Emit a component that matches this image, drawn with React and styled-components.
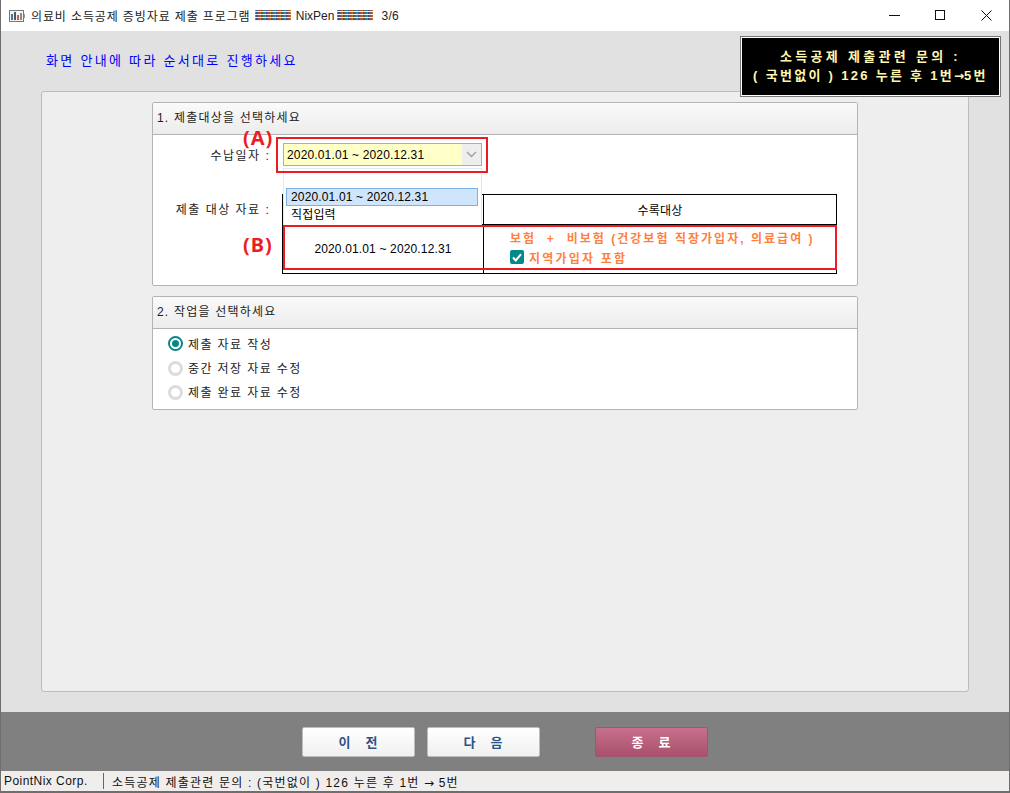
import React from 'react'
import styled, { createGlobalStyle } from 'styled-components'

const Global = createGlobalStyle`
    html, body {
        margin: 0;
        padding: 0;
    }
    body {
        font-family: "Liberation Sans", "Noto Sans CJK KR", sans-serif;
        font-size: 12px;
        color: #000;
    }
`

const Window = styled.div`
    width: 1010px;
    height: 793px;
    box-sizing: border-box;
    display: flex;
    flex-direction: column;
    border: 1px solid #6e6e6e;
    border-top: 0;
    border-bottom-width: 2px;
    overflow: hidden;
`

const TitleBar = styled.div`
    height: 31px;
    flex: none;
    background: #fff;
    display: flex;
    align-items: center;
    padding-left: 8px;
`

const TitleText = styled.span`
    margin-left: 6px;
    font-size: 12px;
    letter-spacing: 0.88px;
    color: #222;
    white-space: pre;
    display: flex;
    align-items: center;
`

const TitleLatin = styled.span`
    letter-spacing: 0;
    margin-right: 3px;
`

const TitleStep = styled.span`
    letter-spacing: 0.3px;
    margin-left: 3px;
`

const Hatch = styled.span`
    display: inline-block;
    width: 36px;
    height: 11px;
    margin-right: 5px;
    background-image:
        repeating-linear-gradient(0deg, rgba(255, 255, 255, 0.9) 0 1px, transparent 1px 3px),
        repeating-linear-gradient(90deg, #b5702f 0 1px, #34508f 1px 2px, #5a5a5a 2px 3px, #a0503f 3px 4px, #2f7f8f 4px 5px);
`

const WinButtons = styled.div`
    margin-left: auto;
    display: flex;
    height: 100%;
`

const WinButton = styled.div`
    width: 46px;
    display: grid;
    place-items: center;
`

const Body = styled.div`
    flex: 1;
    background: #e1e1e1;
    padding: 21px 40px 20px;
    display: flex;
    flex-direction: column;
    position: relative;
`

const Hint = styled.div`
    height: 18px;
    margin: 0 0 21px 5px;
    font-size: 13px;
    line-height: 18px;
    letter-spacing: 2.3px;
    color: #0000ff;
`

const Notice = styled.div`
    position: absolute;
    top: 5px;
    right: 8px;
    width: 261px;
    height: 61px;
    box-sizing: border-box;
    background: #000;
    border: 1px solid #fff;
    outline: 1px solid #777;
    outline-offset: -1px;
    box-shadow: inset 0 0 0 1px #fff;
    color: #fff7b0;
    font-size: 13px;
    font-weight: 700;
    line-height: 19px;
    text-align: center;
    display: flex;
    flex-direction: column;
    justify-content: center;
`

const NoticeLine = styled.div`
    letter-spacing: ${p => p.$spacing}px;
    white-space: pre;
`

const ArrowGlyph = styled.span`
    font-family: "DejaVu Sans", sans-serif;
    font-size: ${p => p.$size || 12}px;
    letter-spacing: 0;
`

const Panel = styled.div`
    flex: 1;
    background: #eeeeee;
    border: 1px solid #bcbcbc;
    border-radius: 3px;
    padding: 10px 110px;
    display: flex;
    flex-direction: column;
    gap: 10px;
`

const Group = styled.section`
    background: #fff;
    border: 1px solid #b4b4b4;
    border-radius: 2px;
    position: relative;
`

const GroupHead = styled.div`
    height: 32px;
    box-sizing: border-box;
    border-bottom: 1px solid #b4b4b4;
    background: linear-gradient(#fafafa, #ececec);
    padding-left: 4px;
    font-size: 12px;
    letter-spacing: 1.2px;
    line-height: 30px;
    color: #222;
`

const TargetBody = styled.div`
    height: 150px;
    position: relative;
    display: grid;
    grid-template-columns: 130px 1fr;
    grid-template-rows: 38px 21px 80px;
    padding-right: 20px;
`

const Label = styled.div`
    grid-column: 1;
    grid-row: ${p => (p.$low ? 3 : 1)};
    justify-self: end;
    align-self: ${p => (p.$low ? 'start' : 'center')};
    margin-top: ${p => (p.$low ? '6px' : '0')};
    margin-right: 3px;
    font-size: 12px;
    letter-spacing: 1.5px;
    white-space: pre;
    color: #222;
`

const SelectBox = styled.div`
    grid-column: 2;
    grid-row: 1;
    align-self: start;
    justify-self: start;
    width: 199px;
    height: 23px;
    margin-top: 8px;
    box-sizing: border-box;
    background: #ffffc8;
    border: 1px solid #adadad;
    display: flex;
    align-items: center;
    padding-left: 3px;
    letter-spacing: 0.15px;
    position: relative;
`

const Arrow = styled.span`
    position: absolute;
    right: 0;
    top: 0;
    bottom: 0;
    width: 19px;
    background: #eeeeee;
    display: grid;
    place-items: center;
`

const Listbox = styled.div`
    position: absolute;
    left: 130px;
    top: 33px;
    width: 199px;
    height: 58px;
    box-sizing: border-box;
    background: #fff;
    border: 1px solid #e6e6f2;
    border-bottom: 0;
    padding: 19px 3px 0 2px;
    z-index: 2;
`

const Option = styled.div`
    height: 18px;
    box-sizing: border-box;
    line-height: 16px;
    padding-left: 4px;
    letter-spacing: 0.15px;
    background: ${p => (p.$active ? '#cfe5fb' : 'transparent')};
    border: 1px solid ${p => (p.$active ? '#7cb1e2' : 'transparent')};
`

const Table = styled.div`
    grid-column: 2;
    grid-row: 3;
    width: 555px;
    height: 80px;
    margin-left: -1px;
    box-sizing: border-box;
    border: 1px solid #000;
    display: grid;
    grid-template-columns: 200px 1fr;
    grid-template-rows: 29px 1fr;
    align-self: start;
`

const Cell = styled.div`
    border-left: ${p => (p.$divide ? '1px solid #000' : '0')};
    border-top: ${p => (p.$top ? '1px solid #000' : '0')};
    display: flex;
    flex-direction: column;
    align-items: ${p => (p.$left ? 'flex-start' : 'center')};
    justify-content: center;
    padding-left: ${p => (p.$left ? '26px' : '0')};
    padding-bottom: ${p => (p.$left ? '4px' : '0')};
    letter-spacing: 0.15px;
    gap: 3px;
`

const Orange = styled.div`
    color: #ff7f3f;
    font-weight: 700;
    font-size: 12px;
    letter-spacing: ${p => p.$spacing || 2.2}px;
    display: flex;
    align-items: center;
    gap: 5px;
    white-space: pre;
`

const Check = styled.span`
    width: 14px;
    height: 14px;
    border-radius: 2px;
    background: #008a8a;
    display: grid;
    place-items: center;
`

const RedBox = styled.div`
    position: absolute;
    left: ${p => p.$left}px;
    top: ${p => p.$top}px;
    width: ${p => p.$width}px;
    height: ${p => p.$height}px;
    box-sizing: border-box;
    border: 2px solid #ed1c24;
    z-index: 3;
`

const Mark = styled.div`
    position: absolute;
    left: ${p => p.$left}px;
    top: ${p => p.$top}px;
    color: #ed1c24;
    font-family: "Noto Sans", "Liberation Sans", sans-serif;
    font-size: 20px;
    font-weight: 700;
    letter-spacing: 1px;
    line-height: 24px;
    z-index: 3;
`

const RadioList = styled.div`
    height: 80px;
    box-sizing: border-box;
    padding: 2px 0 0 15px;
    display: flex;
    flex-direction: column;
`

const RadioRow = styled.div`
    height: 24px;
    display: flex;
    align-items: center;
    gap: 5px;
    letter-spacing: 1.4px;
    color: #222;
`

const Radio = styled.span`
    width: 15px;
    height: 15px;
    margin-top: ${p => (p.$on ? '1px' : '3px')};
    box-sizing: border-box;
    border-radius: 50%;
    border: ${p => (p.$on ? '2px solid #0d8585' : '3px solid #dcdcdc')};
    display: grid;
    place-items: center;
    background: #fff;
    &::after {
        content: '';
        width: 7px;
        height: 7px;
        border-radius: 50%;
        background: ${p => (p.$on ? '#0d8585' : 'transparent')};
    }
`

const Footer = styled.div`
    height: 59px;
    flex: none;
    background: #808080;
    display: flex;
    align-items: center;
    padding-left: 301px;
    gap: 12px;
`

const Button = styled.button`
    width: 113px;
    height: 30px;
    padding: 0;
    border-radius: 2px;
    border: 1px solid ${p => (p.$danger ? '#a0566f' : '#bdbdbd')};
    background: ${p => (p.$danger ? 'linear-gradient(#c7708c, #a9506c)' : 'linear-gradient(#ffffff, #f0f0f0)')};
    color: ${p => (p.$danger ? '#fff' : '#2c5488')};
    font-family: inherit;
    font-size: 13px;
    font-weight: 700;
    letter-spacing: 1px;
    white-space: pre;
    margin-left: ${p => (p.$danger ? '43px' : '0')};
`

const StatusBar = styled.div`
    height: 20px;
    flex: none;
    background: #f0eded;
    display: flex;
    align-items: center;
    font-size: 12px;
    white-space: pre;
    color: #111;
`

const StatusLeft = styled.span`
    width: 103px;
    box-sizing: border-box;
    padding-left: 3px;
    letter-spacing: 0.45px;
    border-right: 1px solid #666;
    line-height: 16px;
`

const StatusRight = styled.span`
    padding-left: 8px;
    letter-spacing: 1.2px;
`

const ChartIcon = () => (
    <svg width="16" height="12" viewBox="0 0 16 12">
        <rect x="0.5" y="0.5" width="14" height="11" fill="#f4f4f4" stroke="#777" />
        <rect x="15" y="4" width="1" height="4" fill="#999" />
        <rect x="2" y="4" width="2" height="6" fill="#3a7ca8" />
        <rect x="5" y="2" width="2" height="8" fill="#555" />
        <rect x="8" y="5" width="2" height="5" fill="#c75b4a" />
        <rect x="11" y="3" width="2" height="7" fill="#888" />
    </svg>
)

const App = () => {
    const range = '2020.01.01 ~ 2020.12.31'
    return (
        <Window>
            <Global />
            <TitleBar>
                <ChartIcon />
                <TitleText>
                    의료비 소득공제 증빙자료 제출 프로그램 <Hatch /><TitleLatin>NixPen</TitleLatin><Hatch /><TitleStep>3/6</TitleStep>
                </TitleText>
                <WinButtons>
                    <WinButton>
                        <svg width="11" height="11" viewBox="0 0 11 11"><path d="M0 5.5h11" stroke="#111" /></svg>
                    </WinButton>
                    <WinButton>
                        <svg width="11" height="11" viewBox="0 0 11 11"><rect x="0.5" y="0.5" width="9" height="9" fill="none" stroke="#111" /></svg>
                    </WinButton>
                    <WinButton>
                        <svg width="11" height="11" viewBox="0 0 11 11"><path d="M0.5 0.5l10 10M10.5 0.5l-10 10" stroke="#111" /></svg>
                    </WinButton>
                </WinButtons>
            </TitleBar>
            <Body>
                <Hint>화면 안내에 따라 순서대로 진행하세요</Hint>
                <Notice>
                    <NoticeLine $spacing={3.3}>소득공제 제출관련 문의 :</NoticeLine>
                    <NoticeLine $spacing={2.3}>( 국번없이 ) 126 누른 후 1번<ArrowGlyph>→</ArrowGlyph>5번</NoticeLine>
                </Notice>
                <Panel>
                    <Group>
                        <GroupHead>1. 제출대상을 선택하세요</GroupHead>
                        <TargetBody>
                            <Label>수납일자 :  </Label>
                            <SelectBox>
                                {range}
                                <Arrow>
                                    <svg width="11" height="7" viewBox="0 0 11 7"><path d="M1 1l4.5 4.5L10 1" fill="none" stroke="#a0a0a0" strokeWidth="1.4" /></svg>
                                </Arrow>
                            </SelectBox>
                            <Label $low>제출 대상 자료 :  </Label>
                            <Table>
                                <Cell />
                                <Cell $divide>수록대상</Cell>
                                <Cell $top>{range}</Cell>
                                <Cell $top $divide $left>
                                    <Orange $spacing={2.03}>보험  +  비보험 (건강보험 직장가입자, 의료급여 )</Orange>
                                    <Orange>
                                        <Check>
                                            <svg width="10" height="9" viewBox="0 0 10 9"><path d="M1 4.5l2.8 3L9 1.2" fill="none" stroke="#fff" strokeWidth="2" /></svg>
                                        </Check>
                                        지역가입자 포함
                                    </Orange>
                                </Cell>
                            </Table>
                            <Listbox>
                                <Option $active>{range}</Option>
                                <Option>직접입력</Option>
                            </Listbox>
                            <RedBox $left={123} $top={2} $width={212} $height={36} />
                            <RedBox $left={130} $top={90} $width={554} $height={45} />
                            <Mark $left={90} $top={-9}>(A)</Mark>
                            <Mark $left={90} $top={98}>(B)</Mark>
                        </TargetBody>
                    </Group>
                    <Group>
                        <GroupHead>2. 작업을 선택하세요</GroupHead>
                        <RadioList>
                            <RadioRow><Radio $on />제출 자료 작성</RadioRow>
                            <RadioRow><Radio />중간 저장 자료 수정</RadioRow>
                            <RadioRow><Radio />제출 완료 자료 수정</RadioRow>
                        </RadioList>
                    </Group>
                </Panel>
            </Body>
            <Footer>
                <Button>이   전</Button>
                <Button>다   음</Button>
                <Button $danger>종   료</Button>
            </Footer>
            <StatusBar>
                <StatusLeft>PointNix Corp.</StatusLeft>
                <StatusRight>소득공제 제출관련 문의 : (국번없이 ) 126 누른 후 1번 <ArrowGlyph>→</ArrowGlyph> 5번</StatusRight>
            </StatusBar>
        </Window>
    )
}

export default App
